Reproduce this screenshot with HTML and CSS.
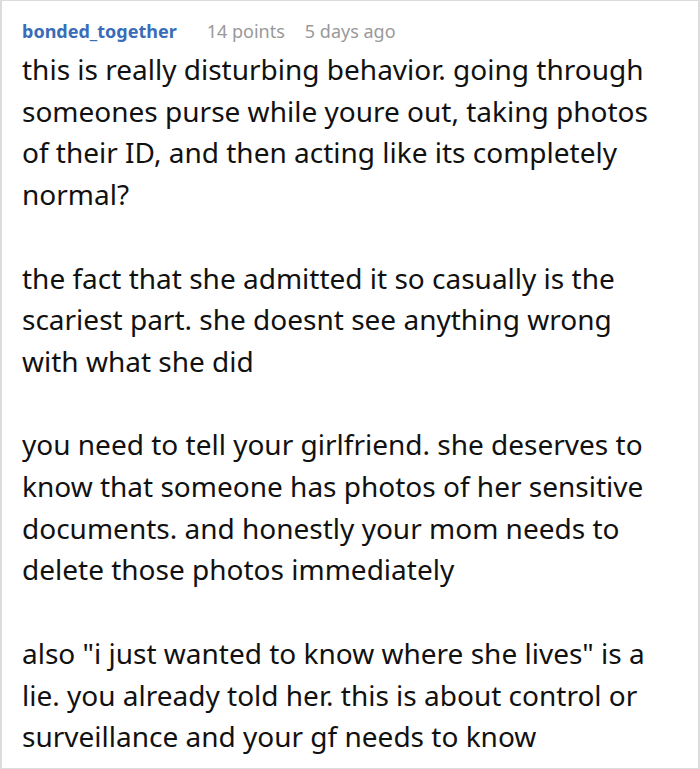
FILE: index.html
```html
<!DOCTYPE html>
<html>
<head>
<meta charset="utf-8">
<link rel="stylesheet" href="styles.css">
</head>
<body>
<div class="comment">
  <div class="meta">
    <span class="author">bonded_together</span>
    <span class="info">14 points</span>
    <span class="info">5 days ago</span>
  </div>
  <div class="body">
    <p>this is really disturbing behavior. going through someones purse while youre out, taking photos of their ID, and then acting like its completely normal?</p>
    <p>the fact that she admitted it so casually is the scariest part. she doesnt see anything wrong with what she did</p>
    <p>you need to tell your girlfriend. she deserves to know that someone has photos of her sensitive documents. and honestly your mom needs to delete those photos immediately</p>
    <p>also "i just wanted to know where she lives" is a lie. you already told her. this is about control or surveillance and your gf needs to know</p>
  </div>
</div>
</body>
</html>
```
FILE: styles.css
```css
html, body {
  margin: 0;
  padding: 0;
  background: #fff;
}
.comment {
  box-sizing: border-box;
  width: 700px;
  height: 769px;
  border: 1px solid #dcdcdc;
  border-left-width: 2px;
  border-right-width: 2px;
  padding: 17px 38px 0 20px;
  font-family: "Noto Sans", "Open Sans", sans-serif;
  overflow: hidden;
}
.meta {
  display: flex;
  gap: 20px;
  font-size: 18px;
  line-height: 26px;
}
.author {
  color: #3a6cb8;
  font-weight: 700;
  margin-right: 10px;
}
.info {
  color: #999;
}
.body {
  font-size: 28px;
  line-height: 41.7px;
  color: #111;
  margin-top: 5px;
}
.body p {
  margin: 0 0 41.7px 0;
}
```
